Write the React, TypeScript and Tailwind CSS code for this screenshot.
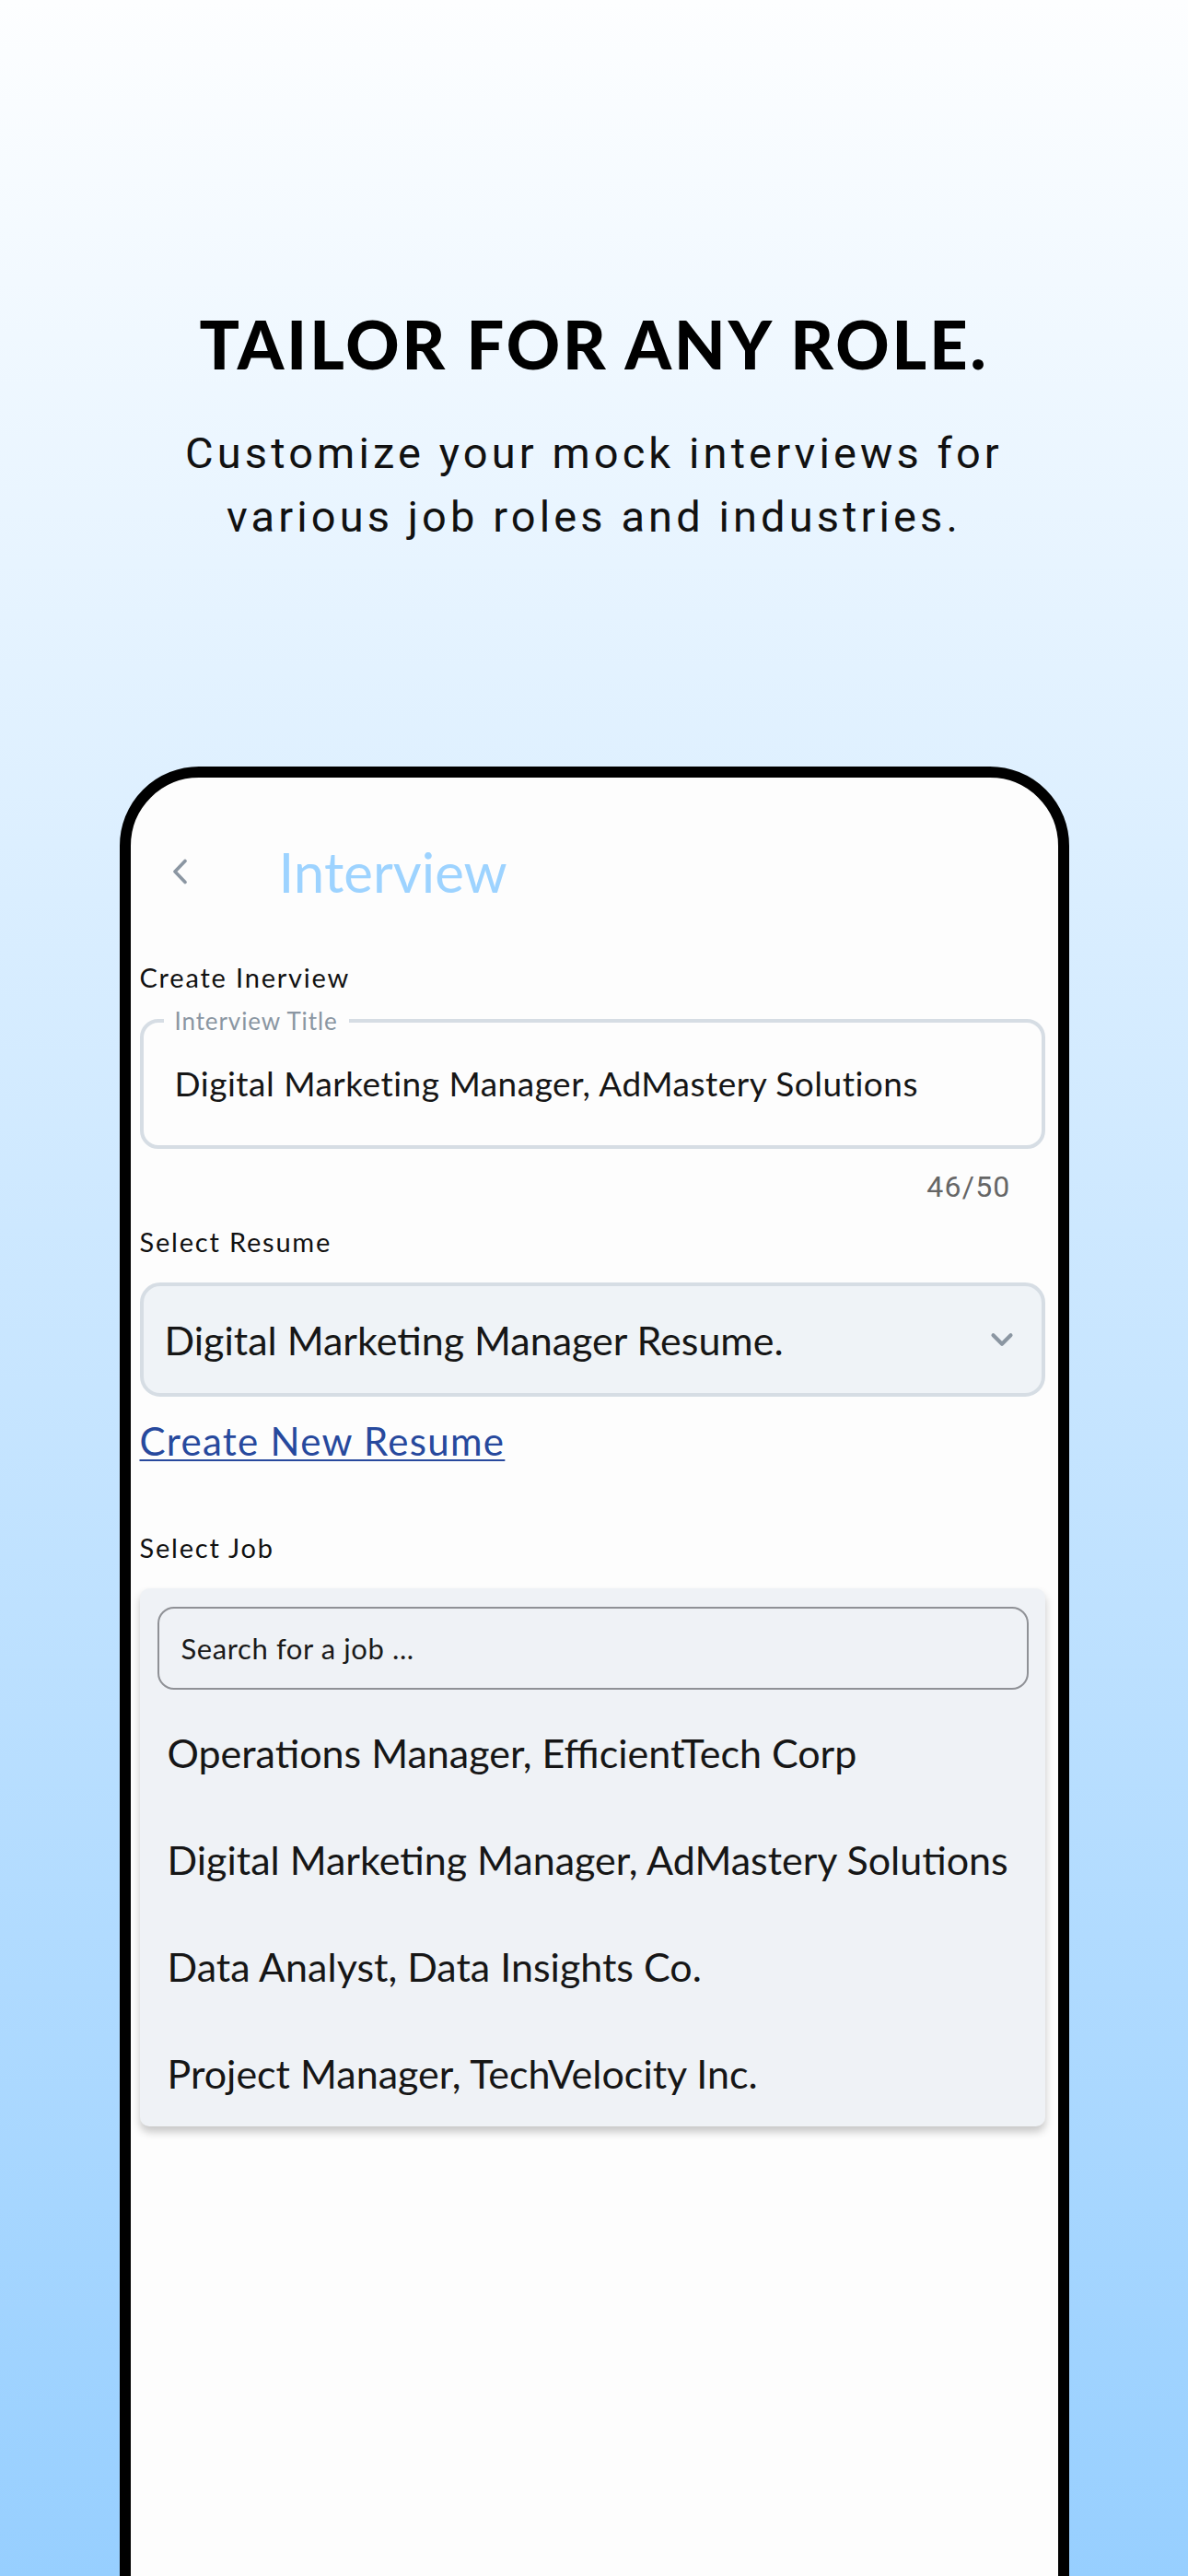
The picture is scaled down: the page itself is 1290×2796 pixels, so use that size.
import { ChevronDown } from "lucide-react";

const jobs = [
    "Operations Manager, EfficientTech Corp",
    "Digital Marketing Manager, AdMastery Solutions",
    "Data Analyst, Data Insights Co.",
    "Project Manager, TechVelocity Inc.",
];

const sans = "font-['Lato','Noto_Sans',sans-serif]";

export default function App() {
    return (
        <div className="w-[1290px] h-[2796px] overflow-hidden flex flex-col items-center bg-gradient-to-b from-[#fdfeff] to-[#97cfff]">
            <h1 className="pt-[337px] text-[72px] leading-none font-black tracking-[3px] text-black font-['Lato',sans-serif]">
                TAILOR FOR ANY ROLE.
            </h1>
            <p className="mt-[48px] text-center text-[47px] leading-[69px] tracking-[4.1px] text-[#111] font-['Roboto',sans-serif]">
                Customize your mock interviews for
                <br />
                various job roles and industries.
            </p>

            <div className="mt-[237px] w-[1031px] h-[2100px] shrink-0 border-[12px] border-black rounded-[86px] bg-[#fdfdfd] pl-[10px] pr-[14px]">
                <div className={`flex items-center pt-[72px] ${sans}`}>
                    {/* back arrow */}
                    <svg
                        className="ml-[34px] w-[18px] h-[28px]"
                        viewBox="0 0 18 28"
                        fill="none"
                    >
                        <polyline
                            points="15,2.5 4,14 15,25.5"
                            stroke="#8b96a2"
                            strokeWidth="3.6"
                            strokeLinecap="round"
                            strokeLinejoin="round"
                        />
                    </svg>
                    <h2 className="ml-[99px] text-[60px] leading-none text-[#9dd3ff]">
                        Interview
                    </h2>
                </div>

                <div className={`flex flex-col ${sans}`}>
                    <span className="mt-[70px] text-[29px] leading-none tracking-[1.8px] text-[#111]">
                        Create Inerview
                    </span>

                    <fieldset className="mt-[20px] border-[4px] border-[#d6dde4] rounded-[20px] p-0">
                        <legend className="ml-[22px] px-[12px] text-[26px] leading-none tracking-[0.9px] text-[#8a96a2]">
                            Interview Title
                        </legend>
                        <div className="pl-[34px] pt-[36px] pb-[49px] text-[37px] leading-none tracking-[0.5px] text-[#161616]">
                            Digital Marketing Manager, AdMastery Solutions
                        </div>
                    </fieldset>

                    <span className="self-end mt-[25px] mr-[37px] text-[32px] leading-none tracking-[1.2px] text-[#666] font-['Roboto',sans-serif]">
                        46/50
                    </span>

                    <span className="mt-[29px] text-[29px] leading-none tracking-[1.8px] text-[#111]">
                        Select Resume
                    </span>

                    <div className="mt-[30px] h-[124px] flex items-center justify-between border-[4px] border-[#d6dde4] rounded-[22px] bg-[#eff3f7] pl-[23px] pr-[24px]">
                        <span className="text-[43px] leading-none text-[#161616]">
                            Digital Marketing Manager Resume.
                        </span>
                        <ChevronDown
                            className="w-[38px] h-[38px] text-[#8b96a2]"
                            strokeWidth={2.6}
                        />
                    </div>

                    <a className="mt-[27px] self-start text-[42px] leading-none tracking-[1.3px] text-[#27499d] underline underline-offset-[4px] decoration-[2px]">
                        Create New Resume
                    </a>

                    <span className="mt-[80px] text-[29px] leading-none tracking-[1.8px] text-[#111]">
                        Select Job
                    </span>

                    <div className="mt-[30px] rounded-[10px] bg-[#eff2f6] shadow-[0_6px_10px_rgba(0,0,0,0.22)] pt-[20px] pl-[19px] pr-[18px]">
                        <div className="h-[90px] flex items-center border-[2.5px] border-[#8f9196] rounded-[18px] pl-[24px] text-[31px] leading-none tracking-[0.6px] text-[#1a1a1a]">
                            Search for a job ...
                        </div>
                        <ul className="mt-[10px]">
                            {jobs.map((job) => (
                                <li
                                    key={job}
                                    className="h-[116px] flex items-center pl-[11px] text-[43px] leading-none text-[#161616]"
                                >
                                    {job}
                                </li>
                            ))}
                        </ul>
                    </div>
                </div>
            </div>
        </div>
    );
}
